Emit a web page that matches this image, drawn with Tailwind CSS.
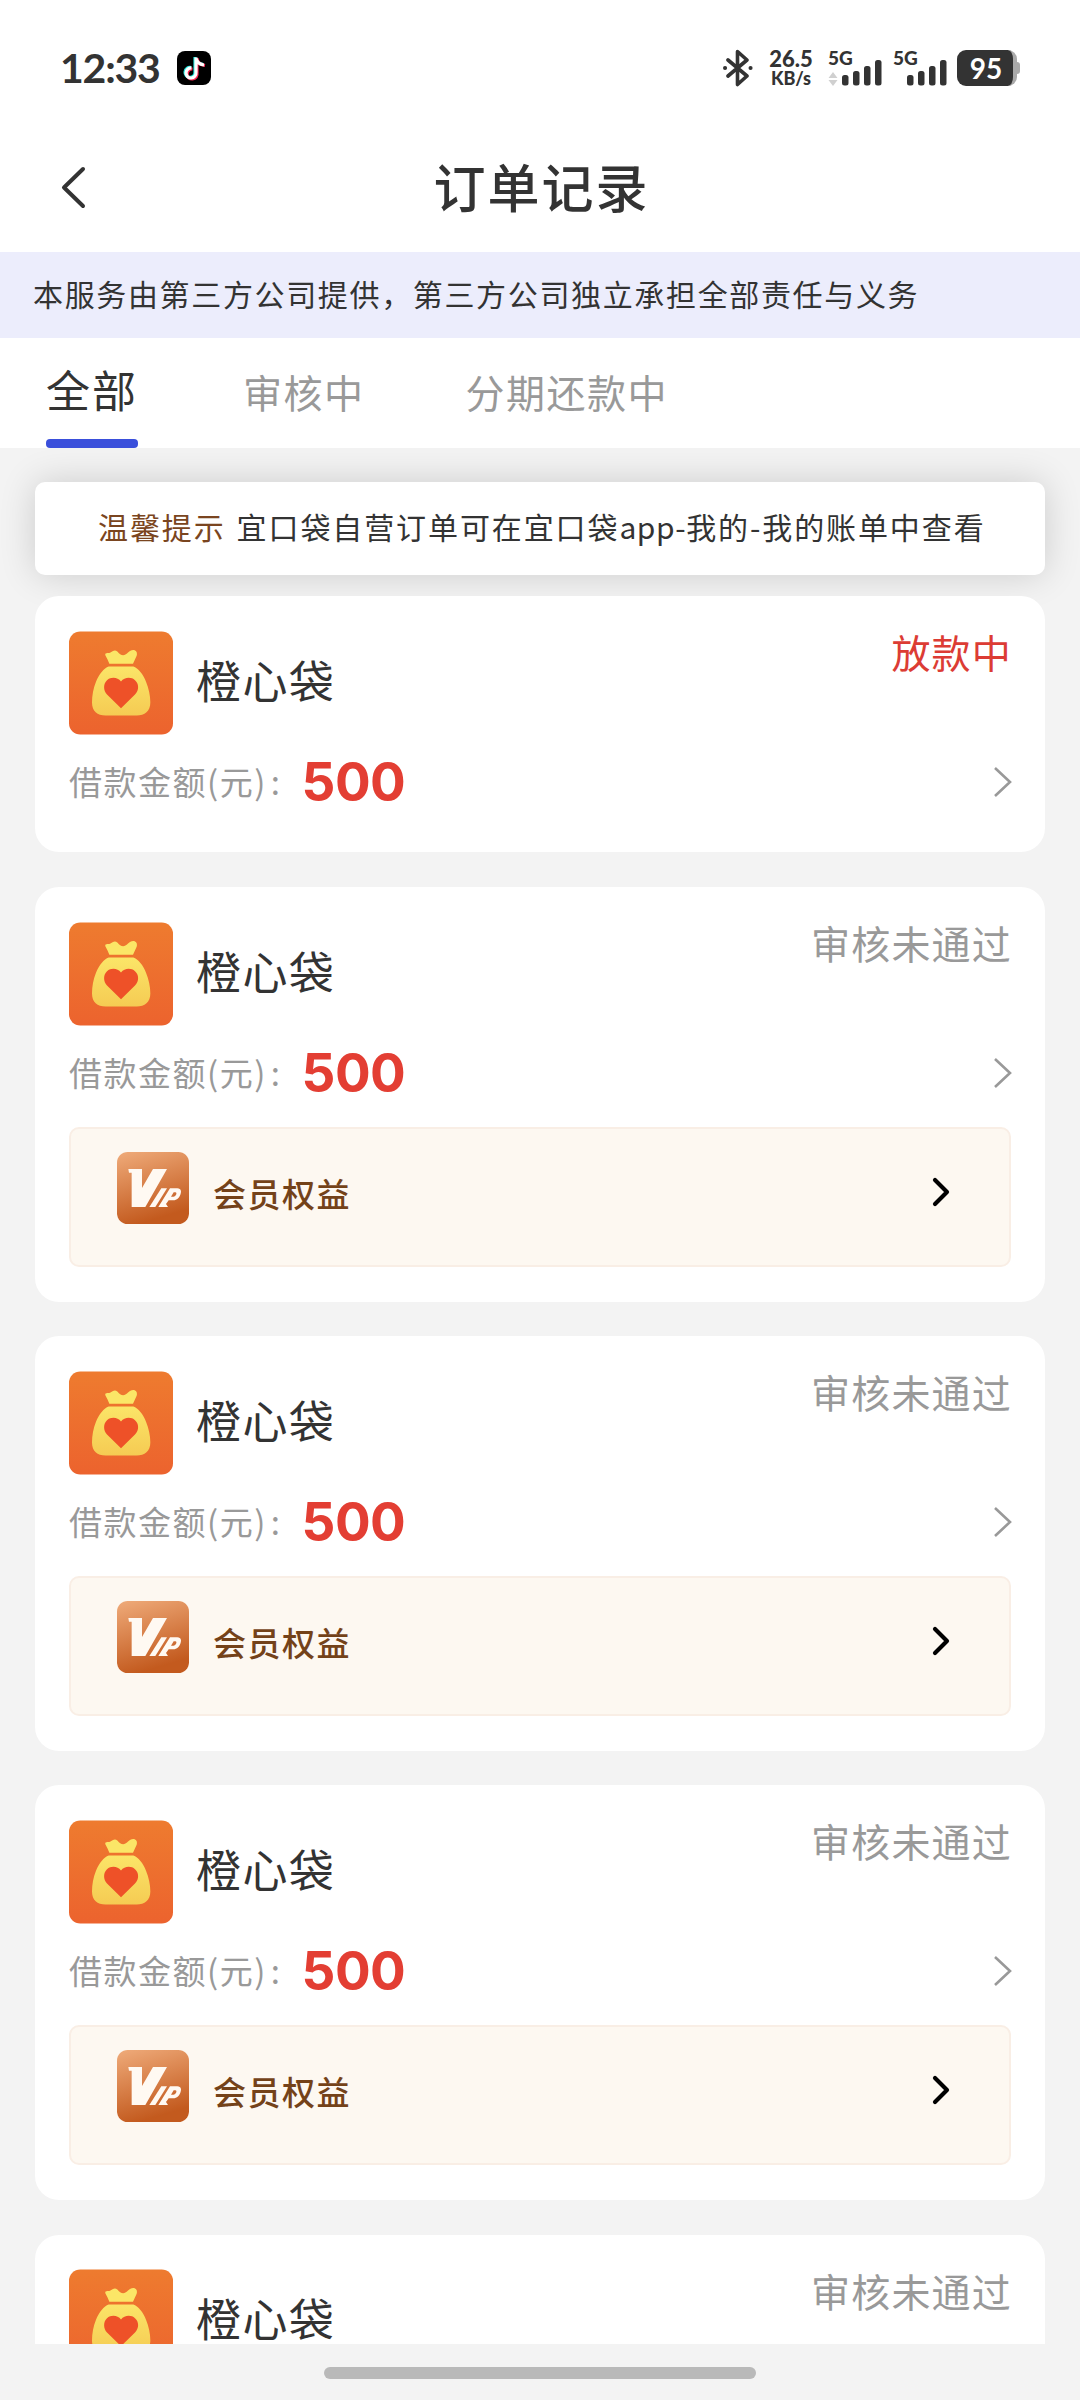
<!DOCTYPE html>
<html lang="zh-CN">
<head>
<meta charset="utf-8">
<title>订单记录</title>
<script src="https://cdn.jsdelivr.net/npm/@tailwindcss/browser@4"></script>
</head>
<body class="bg-[#f3f3f3] text-[#333]">
<svg class="absolute h-0 w-0">
  <linearGradient id="orange" x1="0" y1="0" x2="0" y2="1"><stop offset="0" stop-color="#ee7b2f"/><stop offset="1" stop-color="#ec632e"/></linearGradient>
  <linearGradient id="gold" x1="0" y1="0" x2="0" y2="1"><stop offset="0" stop-color="#fbe568"/><stop offset="1" stop-color="#f5cb53"/></linearGradient>
  <linearGradient id="copper" x1="0" y1="0" x2="0.3" y2="1"><stop offset="0" stop-color="#efab7a"/><stop offset="1" stop-color="#c35a1e"/></linearGradient>
  <symbol id="bag" viewBox="57 63 312 309">
    <rect x="57" y="63" width="312" height="309" rx="34" fill="url(#orange)"/>
    <path d="M166 134C164 126 174 129 180 127C188 121 195 117 202 123C210 134 221 138 230 130C238 121 246 117 254 119C261 122 262 129 260 136L249 160H178L173 148Z" fill="#fbe667"/>
    <path d="M176 168H250C264 172 280 192 288 214C296 234 301 256 301 276C301 302 284 315 260 315H167C142 315 126 302 126 276C126 256 130 234 138 214C147 192 162 172 176 168Z" fill="url(#gold)"/>
    <path d="M213 293L171 252C159 239 160 219 171 209C184 198 203 200 213 213C223 200 243 198 255 209C267 219 268 239 255 252Z" fill="#ee5128"/>
  </symbol>
  <symbol id="vip" viewBox="201 126 216 216">
    <rect x="201" y="126" width="216" height="216" rx="32" fill="url(#copper)"/>
    <path d="M235 177H276V234L309 177H351L286 291H245V188H237Z" fill="#fff9f2"/>
    <path d="M334 235H351L316 291H298Z" fill="#fff9f2"/>
    <path fill-rule="evenodd" d="M360 235H382C394 236 395 245 391 254C386 267 377 271 366 271H356L348 282L354 291H325ZM371 247L363 260H370C378 260 383 247 376 247Z" fill="#fff9f2"/>
  </symbol>
  <symbol id="chev" viewBox="0 0 20 32"><path d="M2 2L17 16L2 30" fill="none" stroke="#999" stroke-width="2.6"/></symbol>
  <symbol id="chevBold" viewBox="0 0 18 30"><path d="M3 3L15 15L3 27" fill="none" stroke="#000" stroke-width="4.2" stroke-linecap="round" stroke-linejoin="round"/></symbol>
  <symbol id="bars" viewBox="0 0 40 26"><g fill="#333"><rect x="0" y="15" width="6.5" height="10.5" rx="2.5"/><rect x="11" y="11" width="6.5" height="14.5" rx="2.5"/><rect x="22" y="6" width="6.5" height="19.5" rx="2.5"/><rect x="33" y="0" width="6.5" height="25.5" rx="2.5"/></g></symbol>
</svg>
<div class="flex h-[2400px] w-[1080px] flex-col overflow-hidden font-['Noto_Sans_CJK_SC',sans-serif]">
  <div class="bg-white">
    <div class="flex h-[136px] items-center pl-[60px] pr-[60px] font-['Lato',sans-serif] font-bold">
      <span class="w-[117px] text-[41px] leading-[48px] tracking-[-1.2px]">12:33</span>
      <svg class="h-[34px] w-[34px]" viewBox="0 0 34 34"><rect width="34" height="34" rx="8" fill="#000"/>
        <g fill="none" stroke-width="3.2"><path d="M18 6V21A5 5 0 1 1 14 16.5M18 7C19 11 22 13 26 13.3" stroke="#25e8e0"/><path d="M20 7V22A5 5 0 1 1 15.500 18M20 8C21 12 24 14 28 14.500" stroke="#fb2b56"/><path d="M19 6.500V21.500A5 5 0 1 1 14.500 17M19 7.500C20 11.500 23 13.500 27 14" stroke="#fff"/></g></svg>
      <svg class="ml-auto h-[38px] w-[32px]" viewBox="0 0 32 38" fill="none" stroke="#333" stroke-width="3.6" stroke-linejoin="round" stroke-linecap="round"><path d="M6 11L25 27L15.500 35.500V2.500L25 11L6 27"/><path d="M3 19H3.100M28.500 19H28.600" stroke-width="4"/></svg>
      <div class="ml-[14px] flex w-[46px] flex-col items-center gap-[3px] font-black"><span class="text-[22px] leading-[17px]">26.5</span><span class="text-[18px] leading-[17px]">KB/s</span></div>
      <div class="relative ml-[14px] h-[36px] w-[54px]"><span class="absolute left-0 top-0 text-[19px] font-black leading-[15px]">5G</span>
        <svg class="absolute left-0 top-[22px] h-[14px] w-[10px]" viewBox="0 0 10 14"><path d="M5 0L9.500 6H.5ZM5 14L9.500 8H.5Z" fill="#d0d0d0"/></svg>
        <svg class="absolute bottom-0 right-0 h-[26px] w-[40px]"><use href="#bars"/></svg></div>
      <div class="relative ml-[11px] h-[36px] w-[54px]"><span class="absolute left-0 top-0 text-[19px] font-black leading-[15px]">5G</span>
        <svg class="absolute bottom-0 right-0 h-[26px] w-[40px]"><use href="#bars"/></svg></div>
      <div class="ml-[10px] flex items-center"><div class="flex h-[36px] w-[60px] items-center justify-center rounded-[9px] border-r-[4px] border-[#aaa] bg-[#333] pl-[2px] text-[28px] leading-[36px] text-white">95</div><div class="h-[12px] w-[3px] rounded-r-sm bg-[#aaa]"></div></div>
    </div>
    <div class="flex h-[116px] items-center justify-between px-[60px] pb-[15px]">
      <svg class="h-[44px] w-[28px]" viewBox="0 0 28 44" fill="none" stroke="#333" stroke-width="4" stroke-linecap="round" stroke-linejoin="round"><path d="M23 4L4 22.500L23 41"/></svg>
      <h1 class="-mt-px ml-[3px] text-[52px] font-medium leading-[60px] tracking-[2px]">订单记录</h1>
      <span class="w-[28px]"></span>
    </div>
  </div>
  <div class="flex h-[86px] items-center bg-[#ecedfc] pb-[4px] pl-[33px] text-[30px] leading-[40px] tracking-[1.65px]">本服务由第三方公司提供，第三方公司独立承担全部责任与义务</div>
  <nav class="flex h-[110px] items-start whitespace-nowrap bg-white pl-[46px] text-[39px] leading-[106px] tracking-[1.5px] text-[#999]">
    <div class="flex h-[110px] w-[92px] flex-col items-center text-[44px] leading-[103px] tracking-[2px] text-[#333]"><span class="h-[101px]">全部</span><i class="h-[9px] w-[92px] rounded-[4px] bg-[#3a4fdb]"></i></div>
    <span class="ml-[105px]">审核中</span>
    <span class="ml-[101px]">分期还款中</span>
  </nav>
  <main class="h-[1896px] overflow-hidden px-[35px] pt-[34px]">
    <div class="flex h-[93px] items-center whitespace-nowrap rounded-[10px] bg-white pb-[6px] pl-[63px] text-[30px] leading-[40px] tracking-[1.9px] shadow-[0_0_36px_rgba(0,0,0,0.16)]"><span class="text-[#7a4520]">温馨提示</span><span class="ml-[11px]">宜口袋自营订单可在宜口袋<span class="tracking-[0.5px]">app-</span>我的-我的账单中查看</span></div>

    <section class="relative mt-[21px] h-[256px] rounded-[24px] bg-white px-[34px] pt-[35px]">
      <div class="flex h-[104px]"><svg class="h-[104px] w-[104px]"><use href="#bag"/></svg><h2 class="ml-[23px] text-[45px] leading-[98px] tracking-[1.4px]">橙心袋</h2><span class="-mr-px ml-auto text-[39px] leading-[41px] tracking-[1.2px] text-[#dc3c34]">放款中</span></div>
      <div class="mt-[15px] flex h-[64px] items-center"><span class="pb-[2px] text-[33px] leading-[60px] tracking-[1.5px] text-[#999]">借款金额(元)<span class="ml-[4px]">:</span></span><b class="ml-[20px] font-['Inter',sans-serif] text-[53px] leading-[60px] tracking-[-0.5px] text-[#e33e33]">500</b><svg class="-mr-[2px] ml-auto h-[32px] w-[20px]"><use href="#chev"/></svg></div>
    </section>

    <section class="mt-[35px] h-[415px] rounded-[24px] bg-white px-[34px] pt-[35px]">
      <div class="flex h-[104px]"><svg class="h-[104px] w-[104px]"><use href="#bag"/></svg><h2 class="ml-[23px] text-[45px] leading-[98px] tracking-[1.4px]">橙心袋</h2><span class="-mr-px ml-auto text-[39px] leading-[41px] tracking-[1.2px] text-[#999]">审核未通过</span></div>
      <div class="mt-[15px] flex h-[64px] items-center"><span class="pb-[2px] text-[33px] leading-[60px] tracking-[1.5px] text-[#999]">借款金额(元)<span class="ml-[4px]">:</span></span><b class="ml-[20px] font-['Inter',sans-serif] text-[53px] leading-[60px] tracking-[-0.5px] text-[#e33e33]">500</b><svg class="-mr-[2px] ml-auto h-[32px] w-[20px]"><use href="#chev"/></svg></div>
      <div class="mt-[22px] flex h-[140px] items-start rounded-[10px] border-2 border-[#f9eee5] bg-[#fdf8f1] pl-[46px] pr-[59px] pt-[23px]"><svg class="h-[72px] w-[72px]"><use href="#vip"/></svg><span class="ml-[24px] text-[33px] font-medium leading-[83px] tracking-[1.5px] text-[#744219]">会员权益</span><svg class="ml-auto mt-[25px] h-[30px] w-[18px]"><use href="#chevBold"/></svg></div>
    </section>

    <section class="mt-[34px] h-[415px] rounded-[24px] bg-white px-[34px] pt-[35px]">
      <div class="flex h-[104px]"><svg class="h-[104px] w-[104px]"><use href="#bag"/></svg><h2 class="ml-[23px] text-[45px] leading-[98px] tracking-[1.4px]">橙心袋</h2><span class="-mr-px ml-auto text-[39px] leading-[41px] tracking-[1.2px] text-[#999]">审核未通过</span></div>
      <div class="mt-[15px] flex h-[64px] items-center"><span class="pb-[2px] text-[33px] leading-[60px] tracking-[1.5px] text-[#999]">借款金额(元)<span class="ml-[4px]">:</span></span><b class="ml-[20px] font-['Inter',sans-serif] text-[53px] leading-[60px] tracking-[-0.5px] text-[#e33e33]">500</b><svg class="-mr-[2px] ml-auto h-[32px] w-[20px]"><use href="#chev"/></svg></div>
      <div class="mt-[22px] flex h-[140px] items-start rounded-[10px] border-2 border-[#f9eee5] bg-[#fdf8f1] pl-[46px] pr-[59px] pt-[23px]"><svg class="h-[72px] w-[72px]"><use href="#vip"/></svg><span class="ml-[24px] text-[33px] font-medium leading-[83px] tracking-[1.5px] text-[#744219]">会员权益</span><svg class="ml-auto mt-[25px] h-[30px] w-[18px]"><use href="#chevBold"/></svg></div>
    </section>

    <section class="mt-[34px] h-[415px] rounded-[24px] bg-white px-[34px] pt-[35px]">
      <div class="flex h-[104px]"><svg class="h-[104px] w-[104px]"><use href="#bag"/></svg><h2 class="ml-[23px] text-[45px] leading-[98px] tracking-[1.4px]">橙心袋</h2><span class="-mr-px ml-auto text-[39px] leading-[41px] tracking-[1.2px] text-[#999]">审核未通过</span></div>
      <div class="mt-[15px] flex h-[64px] items-center"><span class="pb-[2px] text-[33px] leading-[60px] tracking-[1.5px] text-[#999]">借款金额(元)<span class="ml-[4px]">:</span></span><b class="ml-[20px] font-['Inter',sans-serif] text-[53px] leading-[60px] tracking-[-0.5px] text-[#e33e33]">500</b><svg class="-mr-[2px] ml-auto h-[32px] w-[20px]"><use href="#chev"/></svg></div>
      <div class="mt-[22px] flex h-[140px] items-start rounded-[10px] border-2 border-[#f9eee5] bg-[#fdf8f1] pl-[46px] pr-[59px] pt-[23px]"><svg class="h-[72px] w-[72px]"><use href="#vip"/></svg><span class="ml-[24px] text-[33px] font-medium leading-[83px] tracking-[1.5px] text-[#744219]">会员权益</span><svg class="ml-auto mt-[25px] h-[30px] w-[18px]"><use href="#chevBold"/></svg></div>
    </section>

    <section class="mt-[35px] h-[415px] rounded-[24px] bg-white px-[34px] pt-[34px]">
      <div class="flex h-[104px]"><svg class="h-[104px] w-[104px]"><use href="#bag"/></svg><h2 class="ml-[23px] text-[45px] leading-[98px] tracking-[1.4px]">橙心袋</h2><span class="-mr-px ml-auto text-[39px] leading-[42px] tracking-[1.2px] text-[#999]">审核未通过</span></div>
    </section>
  </main>
  <footer class="flex h-[56px] justify-center pt-[23px]"><div class="h-[12px] w-[432px] rounded-full bg-[#b9b9b9]"></div></footer>
</div>
</body>
</html>
